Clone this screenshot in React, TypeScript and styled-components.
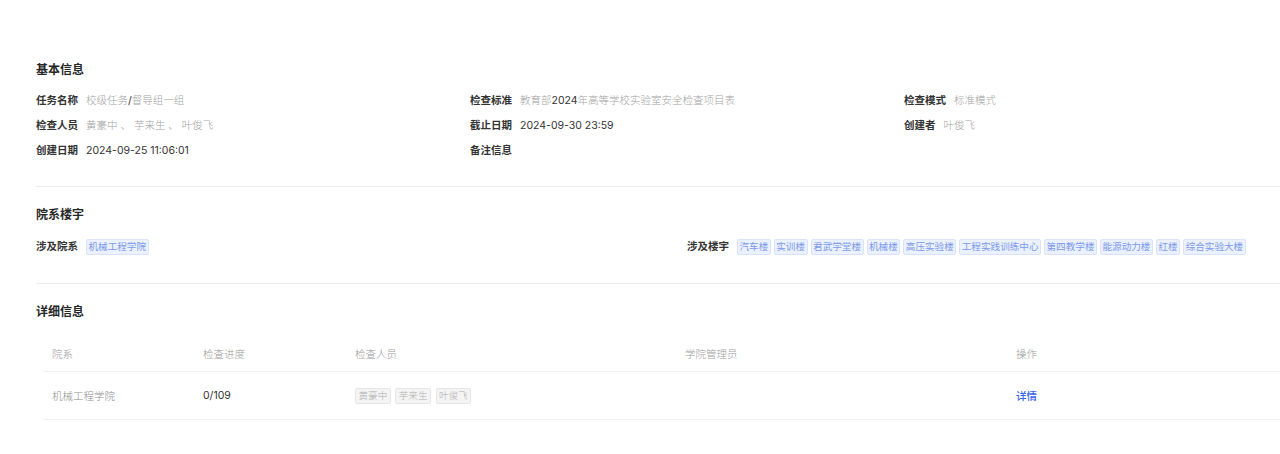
import * as React from 'react';
import styled, { createGlobalStyle } from 'styled-components';

const GlobalStyle = createGlobalStyle`
  html, body {
    margin: 0;
    padding: 0;
    background: #ffffff;
    overflow-x: hidden;
  }
  body {
    font-family: Inter, "Noto Sans CJK SC", "Noto Sans", sans-serif;
    color: #333;
  }
`;

const Page = styled.div`
  padding-left: 36px;
`;

const Container = styled.div`
  width: 1302px;
`;

const Section = styled.section<{ $top: number; $bottom?: number; $last?: boolean }>`
  padding-top: ${(p) => p.$top}px;
  padding-bottom: ${(p) => p.$bottom ?? 0}px;
  border-bottom: ${(p) => (p.$last ? 'none' : '1px solid #ebebeb')};
`;

const Title = styled.h2<{ $gap: number }>`
  margin: 0 0 ${(p) => p.$gap}px;
  font-size: 12px;
  line-height: 20px;
  font-weight: 600;
  color: #262626;
`;

const Grid = styled.div<{ $cols: number }>`
  display: grid;
  grid-template-columns: repeat(${(p) => p.$cols}, 1fr);
  row-gap: 5px;
`;

const Item = styled.div`
  display: flex;
  align-items: center;
  gap: 8px;
  min-height: 20px;
  font-size: 10.5px;
  line-height: 20px;
`;

const Label = styled.span`
  flex: none;
  font-weight: 600;
  color: #333;
`;

const Value = styled.span`
  color: #a3a3a3;
  font-weight: 300;
`;

const Num = styled.span`
  color: #333;
  font-weight: 400;
`;

const TagList = styled.div<{ $gap?: number }>`
  display: flex;
  flex-wrap: wrap;
  gap: ${(p) => p.$gap ?? 3}px;
`;

const Tag = styled.span<{ $tone?: 'blue' | 'gray' }>`
  display: inline-block;
  padding: 0 ${(p) => (p.$tone === 'gray' ? 2.5 : 1.5)}px;
  font-size: 9.6px;
  line-height: 14px;
  border-radius: 2px;
  border: 1px solid ${(p) => (p.$tone === 'gray' ? '#e6e6e6' : '#d9e3fd')};
  background: ${(p) => (p.$tone === 'gray' ? '#f4f4f4' : '#ebf1fe')};
  color: ${(p) => (p.$tone === 'gray' ? '#b0b0b0' : '#7c99ea')};
  white-space: nowrap;
`;

const Table = styled.div`
  margin-left: 8px;
`;

const Row = styled.div<{ $head?: boolean }>`
  display: grid;
  grid-template-columns: 151px 152px 330px 331px 1fr;
  align-items: center;
  height: ${(p) => (p.$head ? 36 : 47)}px;
  border-bottom: 1px solid #efefef;
  font-size: 10.5px;
`;

const Cell = styled.div<{ $tone?: 'head' | 'muted' | 'dark' }>`
  padding-left: 8px;
  color: ${(p) =>
    p.$tone === 'head' ? '#9a9a9a' : p.$tone === 'muted' ? '#8c8c8c' : '#333'};
  font-weight: ${(p) => (p.$tone === 'dark' ? 400 : 300)};
`;

const Link = styled.a`
  color: #3566f0;
  font-weight: 500;
  cursor: pointer;
`;

const buildings = [
  '汽车楼',
  '实训楼',
  '君武学堂楼',
  '机械楼',
  '高压实验楼',
  '工程实践训练中心',
  '第四教学楼',
  '能源动力楼',
  '红楼',
  '综合实验大楼',
];

const inspectors = ['黄豪中', '芋来生', '叶俊飞'];

export default function App() {
  return (
    <Page>
      <GlobalStyle />
      <Container>
        <Section $top={60} $bottom={25}>
          <Title $gap={11}>基本信息</Title>
          <Grid $cols={3}>
            <Item>
              <Label>任务名称</Label>
              <Value>
                校级任务<Num>/</Num>督导组一组
              </Value>
            </Item>
            <Item>
              <Label>检查标准</Label>
              <Value>
                教育部<Num>2024</Num>年高等学校实验室安全检查项目表
              </Value>
            </Item>
            <Item>
              <Label>检查模式</Label>
              <Value>标准模式</Value>
            </Item>
            <Item>
              <Label>检查人员</Label>
              <Value>黄豪中 、 芋来生 、 叶俊飞</Value>
            </Item>
            <Item>
              <Label>截止日期</Label>
              <Value>
                <Num>2024-09-30 23:59</Num>
              </Value>
            </Item>
            <Item>
              <Label>创建者</Label>
              <Value>叶俊飞</Value>
            </Item>
            <Item>
              <Label>创建日期</Label>
              <Value>
                <Num>2024-09-25 11:06:01</Num>
              </Value>
            </Item>
            <Item>
              <Label>备注信息</Label>
            </Item>
          </Grid>
        </Section>

        <Section $top={18} $bottom={26}>
          <Title $gap={12}>院系楼宇</Title>
          <Grid $cols={2}>
            <Item>
              <Label>涉及院系</Label>
              <TagList>
                <Tag>机械工程学院</Tag>
              </TagList>
            </Item>
            <Item>
              <Label>涉及楼宇</Label>
              <TagList>
                {buildings.map((b) => (
                  <Tag key={b}>{b}</Tag>
                ))}
              </TagList>
            </Item>
          </Grid>
        </Section>

        <Section $top={18} $last>
          <Title $gap={13}>详细信息</Title>
          <Table>
            <Row $head>
              <Cell $tone="head">院系</Cell>
              <Cell $tone="head">检查进度</Cell>
              <Cell $tone="head">检查人员</Cell>
              <Cell $tone="head">学院管理员</Cell>
              <Cell $tone="head">操作</Cell>
            </Row>
            <Row>
              <Cell $tone="muted">机械工程学院</Cell>
              <Cell $tone="dark">0/109</Cell>
              <Cell>
                <TagList $gap={4.5}>
                  {inspectors.map((n) => (
                    <Tag key={n} $tone="gray">
                      {n}
                    </Tag>
                  ))}
                </TagList>
              </Cell>
              <Cell />
              <Cell>
                <Link>详情</Link>
              </Cell>
            </Row>
          </Table>
        </Section>
      </Container>
    </Page>
  );
}
